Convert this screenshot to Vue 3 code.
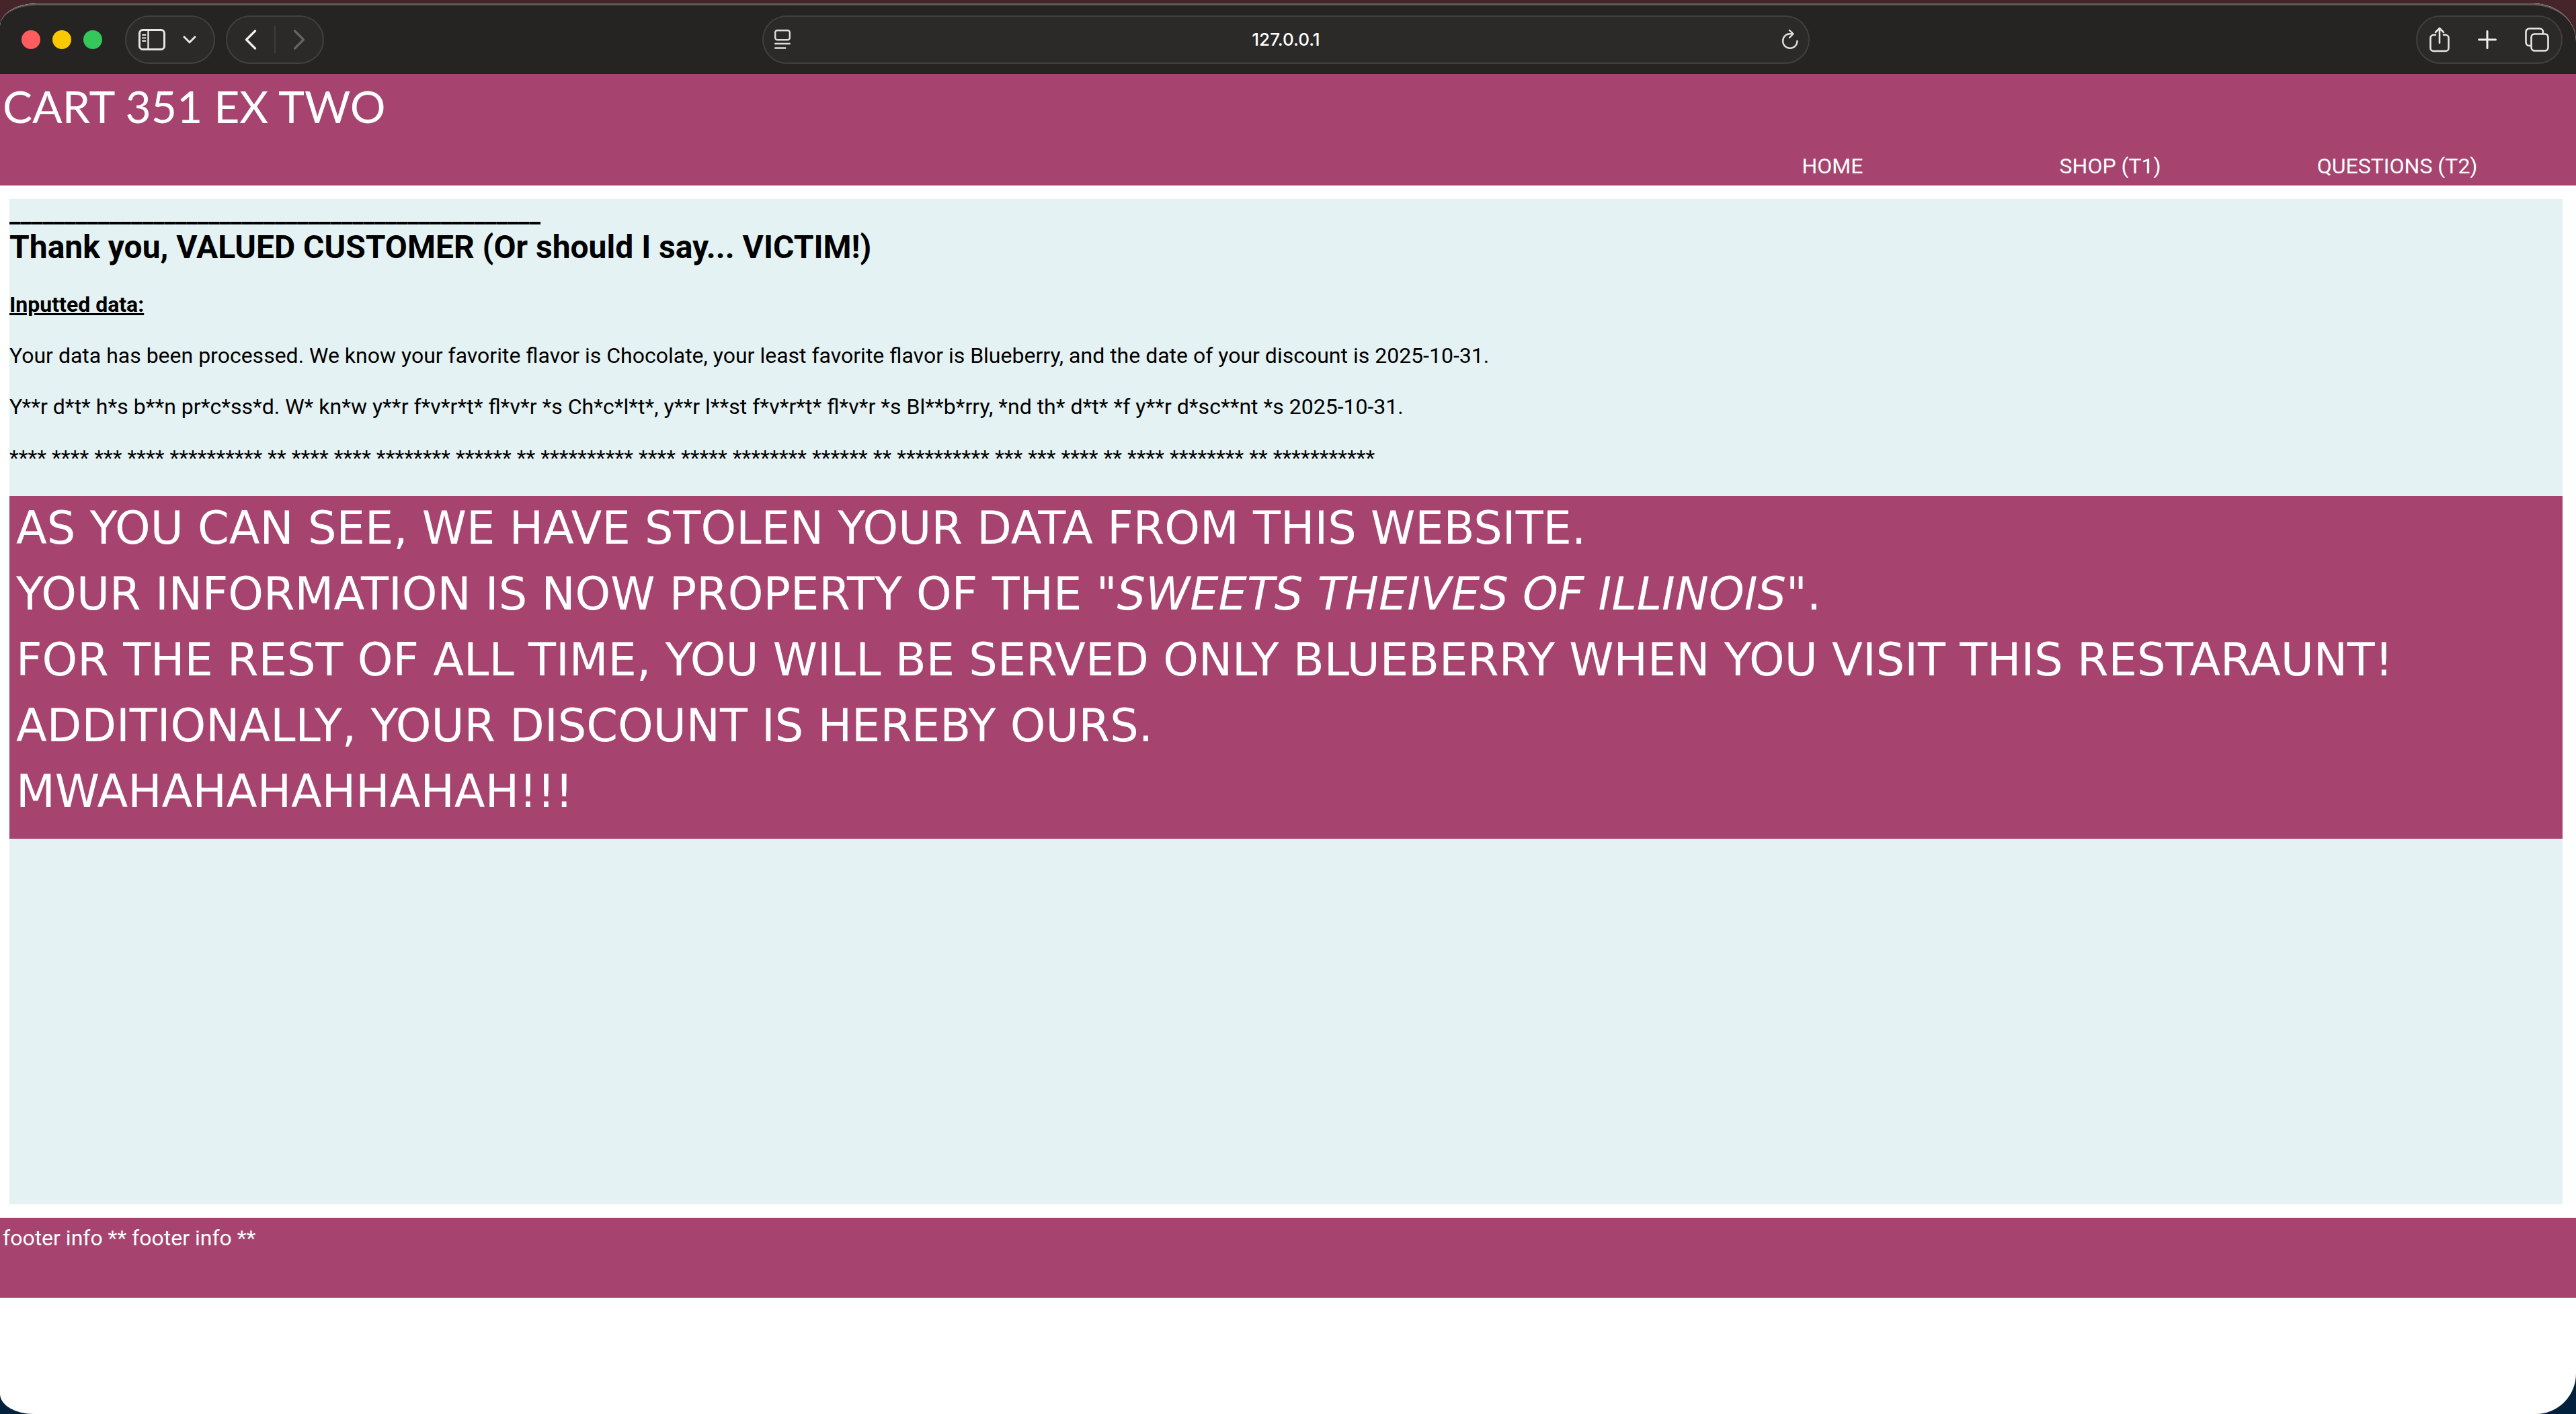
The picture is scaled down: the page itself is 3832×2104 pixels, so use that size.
<script setup>
const links = ['HOME', 'SHOP (T1)', 'QUESTIONS (T2)']
const rule = '_'.repeat(48)
const results = [
  'Your data has been processed. We know your favorite flavor is Chocolate, your least favorite flavor is Blueberry, and the date of your discount is 2025-10-31.',
  'Y**r d*t* h*s b**n pr*c*ss*d. W* kn*w y**r f*v*r*t* fl*v*r *s Ch*c*l*t*, y**r l**st f*v*r*t* fl*v*r *s Bl**b*rry, *nd th* d*t* *f y**r d*sc**nt *s 2025-10-31.',
  '**** **** *** **** ********** ** **** **** ******** ****** ** ********** **** ***** ******** ****** ** ********** *** *** **** ** **** ******** ** ***********'
]
</script>

<template>
  <div class="desktop">
    <div class="window">
      <div class="toolbar">
        <div class="lights">
          <button class="light close" aria-label="Close"></button>
          <button class="light minimize" aria-label="Minimize"></button>
          <button class="light expand" aria-label="Full screen"></button>
        </div>
        <div class="pill sidebar">
          <button aria-label="Sidebar">
            <svg width="40" height="32" viewBox="0 0 40 32" fill="none" stroke="#e6e6e5" stroke-width="3">
              <rect x="1.5" y="1.5" width="37" height="29" rx="5" />
              <path d="M14.5 2v28" stroke-width="2.4" />
              <path d="M6 9h4.5M6 13.5h4.5M6 18h4.5" stroke-width="2" stroke-linecap="round" />
            </svg>
          </button>
          <button aria-label="Tab groups">
            <svg width="20" height="12" viewBox="0 0 20 12" fill="none" stroke="#e6e6e5" stroke-width="3" stroke-linecap="round" stroke-linejoin="round">
              <path d="M2 2l8 8 8-8" />
            </svg>
          </button>
        </div>
        <div class="pill history">
          <button aria-label="Back">
            <svg width="18" height="30" viewBox="0 0 18 30" fill="none" stroke="#f0f0f0" stroke-width="3.2" stroke-linecap="round" stroke-linejoin="round">
              <path d="M15.5 2L2.5 15l13 13" />
            </svg>
          </button>
          <span class="divider"></span>
          <button aria-label="Forward">
            <svg width="18" height="30" viewBox="0 0 18 30" fill="none" stroke="#666564" stroke-width="3.2" stroke-linecap="round" stroke-linejoin="round">
              <path d="M2.5 2l13 13-13 13" />
            </svg>
          </button>
        </div>
        <div class="pill address">
          <button aria-label="Page menu">
            <svg width="24" height="30" viewBox="0 0 24 30" fill="none" stroke="#dededd" stroke-width="2.4" stroke-linecap="round">
              <rect x="1.2" y="1.2" width="21.6" height="14" rx="3" />
              <path d="M1.2 21h21.6M1.2 27.5h15" />
            </svg>
          </button>
          <input type="text" value="127.0.0.1" aria-label="Address" />
          <button aria-label="Reload">
            <svg width="26" height="30" viewBox="0 0 26 30" fill="none" stroke="#dededd" stroke-width="2.4" stroke-linecap="round" stroke-linejoin="round">
              <path d="M23.5 17A10.7 10.7 0 1 1 12.8 6.3H17M12 1l5.5 5.3L12 12" />
            </svg>
          </button>
        </div>
        <div class="pill actions">
          <button aria-label="Share">
            <svg width="30" height="38" viewBox="0 0 30 38" fill="none" stroke="#e6e6e5" stroke-width="2.6" stroke-linecap="round" stroke-linejoin="round">
              <path d="M9 12H6a4.5 4.5 0 0 0-4.5 4.5v15A4.5 4.5 0 0 0 6 36h18a4.5 4.5 0 0 0 4.5-4.5v-15A4.5 4.5 0 0 0 24 12h-3M15 24V2M9 8l6-6 6 6" />
            </svg>
          </button>
          <button aria-label="New tab">
            <svg width="28" height="28" viewBox="0 0 28 28" fill="none" stroke="#f0f0f0" stroke-width="3" stroke-linecap="round">
              <path d="M14 1.5v25M1.5 14h25" />
            </svg>
          </button>
          <button aria-label="Tab overview">
            <svg width="36" height="36" viewBox="0 0 36 36" fill="none" stroke="#e6e6e5" stroke-width="2.6" stroke-linejoin="round">
              <rect x="9.5" y="9.5" width="25" height="25" rx="5" />
              <path d="M9.5 27H6.5a5 5 0 0 1-5-5V6.5a5 5 0 0 1 5-5H22a5 5 0 0 1 5 5v3" />
            </svg>
          </button>
        </div>
      </div>

      <header class="header">
        <h1>CART 351 EX TWO</h1>
        <nav>
          <a v-for="link in links" :key="link" href="#">{{ link }}</a>
        </nav>
      </header>

      <main class="content">
        <h3>{{ rule }}</h3>
        <h2>Thank you, VALUED CUSTOMER (Or should I say... VICTIM!)</h2>
        <h4>Inputted data:</h4>
        <p v-for="line in results" :key="line">{{ line }}</p>
        <section class="message">
          <p>AS YOU CAN SEE, WE HAVE STOLEN YOUR DATA FROM THIS WEBSITE.</p>
          <p>YOUR INFORMATION IS NOW PROPERTY OF THE <em>"SWEETS THEIVES OF ILLINOIS"</em>.</p>
          <p>FOR THE REST OF ALL TIME, YOU WILL BE SERVED ONLY BLUEBERRY WHEN YOU VISIT THIS RESTARAUNT!</p>
          <p>ADDITIONALLY, YOUR DISCOUNT IS HEREBY OURS.</p>
          <p>MWAHAHAHAHHAHAH!!!</p>
        </section>
      </main>

      <footer class="footer">footer info ** footer info **</footer>
    </div>
  </div>
</template>

<style>
body {
  margin: 0;
  background: #02213c;
}
</style>

<style scoped>
.desktop {
  box-sizing: border-box;
  min-height: 100vh;
  padding-top: 5px;
  display: flex;
  background: linear-gradient(#45242a 0 60px, #02213c 60px);
  font-family: Roboto, sans-serif;
  font-size: 32px;
  line-height: 38px;
}

.window {
  flex: 1;
  min-width: 0;
  overflow: hidden;
  background: #fff;
  border-radius: 54px 64px 60px 50px / 34px 56px 60px 30px;
}

.toolbar {
  box-sizing: border-box;
  height: 105px;
  padding: 0 20px 0 32px;
  display: flex;
  align-items: center;
  background: #252422;
  border-top: 3px solid #5f5b5b;
  border-radius: 54px 64px 0 0 / 34px 56px 0 0;
}

button {
  padding: 0;
  border: 0;
  background: none;
  display: flex;
}

.lights {
  display: flex;
  gap: 18px;
}

.light {
  width: 28px;
  height: 28px;
  border-radius: 50%;
}

.close {
  background: #ff5c60;
}

.minimize {
  background: #fac800;
}

.expand {
  background: #35c759;
}

.pill {
  box-sizing: border-box;
  height: 72px;
  display: flex;
  align-items: center;
  justify-content: space-between;
  background: #2b2a28;
  border: 2px solid #453e3e;
  border-radius: 36px;
}

.sidebar {
  width: 134px;
  margin-left: 34px;
  padding: 0 26px 0 18px;
}

.history {
  width: 146px;
  margin-left: 16px;
  padding: 0 26px;
}

.divider {
  width: 2px;
  height: 40px;
  background: #3d3c3b;
}

/* Offset so the field is centred in the window, not between the button groups */
.address {
  width: 1558px;
  margin: 0 auto 0 calc(50% - 1238px);
  padding: 0 14px 0 16px;
}

.address input {
  flex: 1;
  min-width: 0;
  padding: 0;
  border: 0;
  background: none;
  color: #fff;
  font: 500 26px/38px Inter, sans-serif;
  text-align: center;
}

.actions {
  width: 218px;
  padding: 0 18px;
}

.header {
  padding: 4px 0 10px;
  background: #a6446f;
  color: #fff;
}

h1 {
  margin: 0;
  padding-left: 4px;
  font: 400 66px/88px Papyrus, Lato, sans-serif;
}

nav {
  width: 30%;
  margin: 26px 2px 0 auto;
  display: grid;
  grid-template-columns: repeat(3, 1fr);
}

nav a {
  color: inherit;
  text-decoration: none;
}

.content {
  min-height: 1496px;
  margin: 20px 20px 20px 14px;
  background: #e4f2f3;
  color: #000;
}

.content > p,
h2,
h3,
h4 {
  margin: 0 0 38px;
}

h3 {
  margin: 0;
  font-size: 37px;
  line-height: 44px;
}

h2 {
  font-size: 48px;
  line-height: 56px;
}

h4 {
  font-size: 32px;
  text-decoration: underline;
}

.message {
  padding: 4px 10px 26px;
  display: grid;
  gap: 10px;
  background: #a6446f;
  color: #fff;
}

.message p {
  margin: 0;
  font: 400 67px/88px Papyrus, "DejaVu Sans", sans-serif;
}

.footer {
  min-height: 108px;
  padding: 11px 4px 0;
  background: #a6446f;
  color: #fff;
}
</style>
